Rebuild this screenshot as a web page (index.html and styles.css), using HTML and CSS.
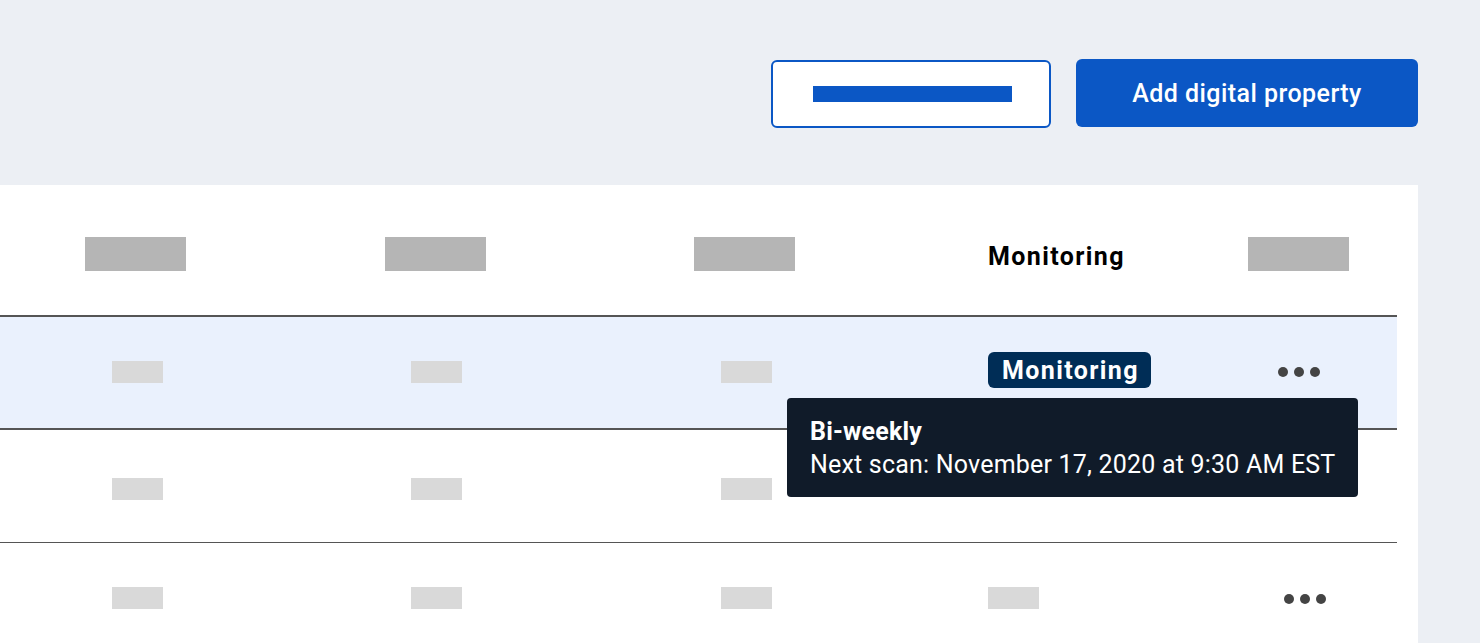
FILE: index.html
```html
<!DOCTYPE html>
<html lang="en">
<head>
<meta charset="utf-8">
<title>Digital properties</title>
<link rel="stylesheet" href="styles.css">
</head>
<body>
  <header class="toolbar">
    <button class="btn btn-outline" type="button"><span class="btn-bar"></span></button>
    <button class="btn btn-primary" type="button">Add digital property</button>
  </header>
  <main class="panel">
    <div class="table">
      <div class="row row-head">
        <div class="cell"><span class="ph ph-head"></span></div>
        <div class="cell"><span class="ph ph-head"></span></div>
        <div class="cell"><span class="ph ph-head"></span></div>
        <div class="cell cell-left"><span class="head-text">Monitoring</span></div>
        <div class="cell"><span class="ph ph-head"></span></div>
      </div>
      <div class="row row-active">
        <div class="cell"><span class="ph"></span></div>
        <div class="cell"><span class="ph"></span></div>
        <div class="cell"><span class="ph"></span></div>
        <div class="cell cell-left">
          <span class="badge-wrap">
            <span class="badge">Monitoring</span>
            <span class="tooltip">
              <strong class="tip-title">Bi-weekly</strong>
              <span class="tip-text">Next scan: November 17, 2020 at 9:30 AM EST</span>
            </span>
          </span>
        </div>
        <div class="cell"><span class="dots"><i></i><i></i><i></i></span></div>
      </div>
      <div class="row row-two">
        <div class="cell"><span class="ph"></span></div>
        <div class="cell"><span class="ph"></span></div>
        <div class="cell"><span class="ph"></span></div>
        <div class="cell cell-left"></div>
        <div class="cell"></div>
      </div>
      <div class="row row-three">
        <div class="cell"><span class="ph"></span></div>
        <div class="cell"><span class="ph"></span></div>
        <div class="cell"><span class="ph"></span></div>
        <div class="cell cell-left"><span class="ph"></span></div>
        <div class="cell"><span class="dots dots-alt"><i></i><i></i><i></i></span></div>
      </div>
    </div>
  </main>
</body>
</html>
```

FILE: styles.css
```css
* { box-sizing: border-box; }

html, body {
  margin: 0;
  padding: 0;
}

body {
  background: #eceff4;
  font-family: Roboto, "Liberation Sans", Arial, sans-serif;
  width: 1480px;
  height: 643px;
  overflow: hidden;
}

.toolbar {
  height: 185px;
  display: flex;
  justify-content: flex-end;
  align-items: flex-start;
  gap: 25px;
  padding: 59px 62px 0 0;
}

.btn {
  height: 68px;
  border-radius: 6px;
  font-family: inherit;
  cursor: pointer;
  display: flex;
  align-items: center;
  justify-content: center;
}

.btn-outline {
  width: 280px;
  margin-top: 1px;
  background: #fff;
  border: 2px solid #0b57c5;
}

.btn-bar {
  display: block;
  width: 199px;
  height: 16px;
  margin-left: 2px;
  background: #0b57c5;
}

.btn-primary {
  width: 342px;
  background: #0b57c5;
  border: 0;
  color: #fff;
  font-size: 25px;
  font-weight: 500;
  letter-spacing: 0.45px;
}

.panel {
  width: 1418px;
  background: #fff;
  padding-right: 21px;
  min-height: 458px;
}

.table {
  width: 1397px;
}

.row {
  display: grid;
  grid-template-columns: 271px 328px 291px 310px 197px;
  align-items: center;
}

.row-head {
  height: 132px;
  padding-top: 8px;
  border-bottom: 2px solid #555;
}

.row-active {
  height: 113px;
  padding-bottom: 2px;
  background: #eaf1fd;
  border-bottom: 2px solid #555;
}

.row-two {
  height: 113px;
  padding-top: 6px;
  border-bottom: 1px solid #555;
}

.row-three {
  height: 113px;
  padding-bottom: 4px;
}

.cell {
  display: flex;
  justify-content: center;
  align-items: center;
}

.cell-left {
  justify-content: flex-start;
  padding-left: 98px;
}

.ph {
  display: block;
  width: 51px;
  height: 22px;
  margin-left: 3px;
  background: #d9d9d9;
}

.ph-head {
  width: 101px;
  height: 34px;
  margin-left: 0;
  background: #b5b5b5;
}

.cell-left .ph {
  margin-left: 0;
}

.head-text {
  font-size: 25px;
  font-weight: 700;
  letter-spacing: 1.4px;
  color: #000;
  margin-top: 4px;
}

.badge-wrap {
  position: relative;
  display: inline-block;
  margin-bottom: 3px;
}

.badge {
  display: inline-flex;
  align-items: center;
  height: 36px;
  padding: 0 12px 0 14px;
  border-radius: 6px;
  background: #002d56;
  color: #fff;
  font-size: 25px;
  font-weight: 700;
  letter-spacing: 1.4px;
}

.tooltip {
  position: absolute;
  left: -201px;
  top: 46px;
  width: 571px;
  height: 99px;
  padding: 17px 23px 0;
  background: #101b29;
  border-radius: 4px;
  color: #fff;
  font-size: 25px;
  line-height: 33px;
  letter-spacing: 0.2px;
  z-index: 2;
  white-space: nowrap;
}

.tip-title {
  display: block;
  font-weight: 700;
}

.tip-text {
  display: block;
  font-weight: 400;
}

.dots {
  display: flex;
  gap: 6px;
}

.dots i {
  display: block;
  width: 10px;
  height: 10px;
  border-radius: 50%;
  background: #444;
}

.dots-alt {
  margin-left: 12px;
  margin-top: 2px;
}
```
